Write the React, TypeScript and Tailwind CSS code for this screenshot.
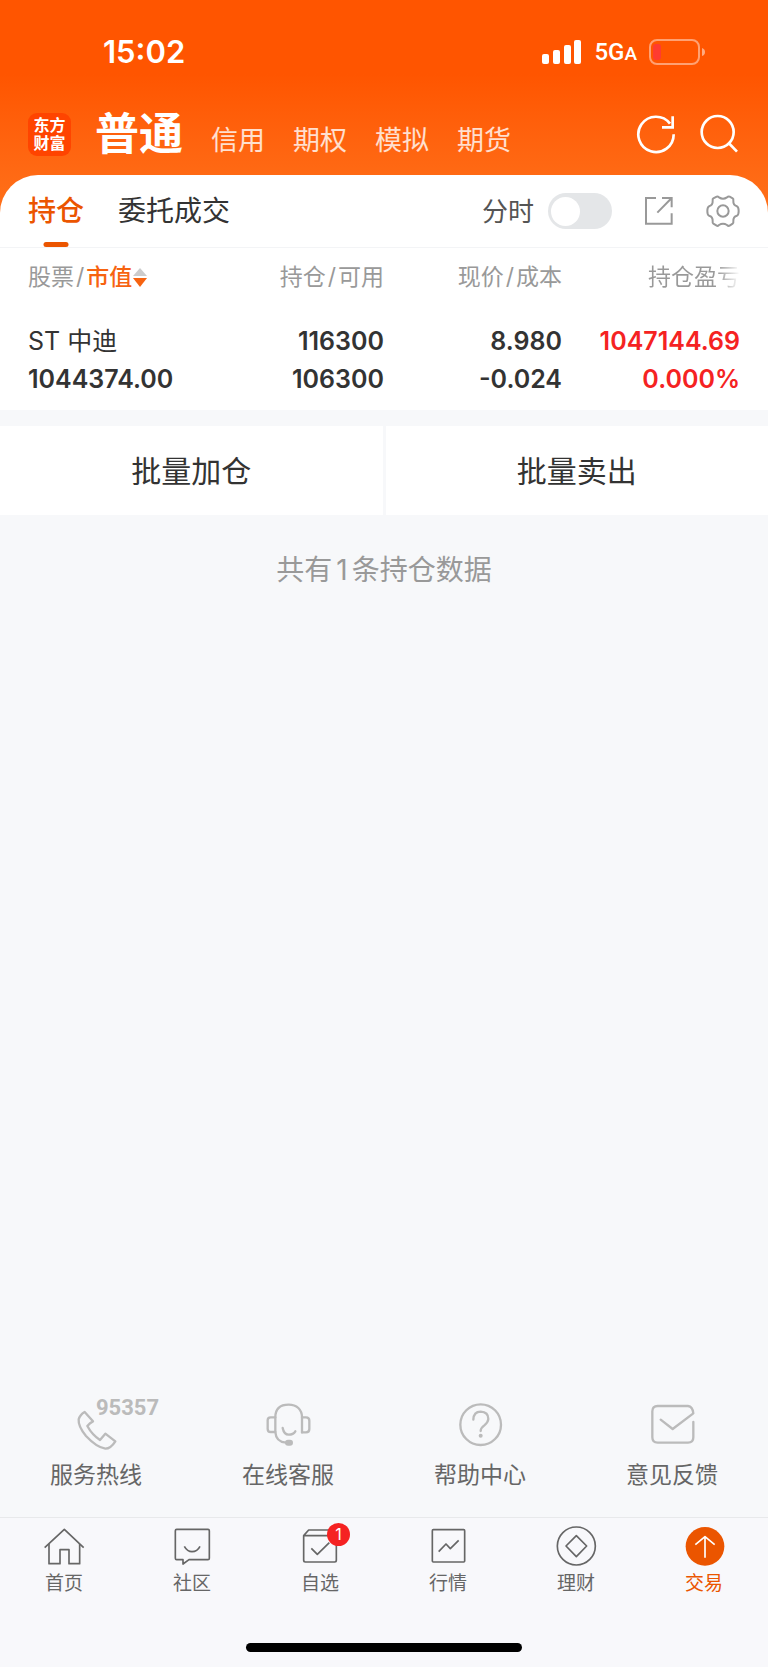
import React, { useState } from 'react'

const accountTypes = ['信用', '期权', '模拟', '期货']

const holdings = [
  {
    name: 'ST 中迪',
    marketValue: '1044374.00',
    amount: '116300',
    available: '106300',
    price: '8.980',
    cost: '-0.024',
    profit: '1047144.69',
    profitRate: '0.000%',
  },
]

const services = [
  {
    label: '服务热线',
    extra: '95357',
    viewBox: '216 72 144 144',
    icon: (
      <path d="M254 96 L279 124 Q270 128 262 138 Q276 164 300 180 L316 161 L346 184 Q332 206 316 206 Q290 202 258 168 Q234 138 236 118 Q240 104 254 96 Z" />
    ),
  },
  {
    label: '在线客服',
    viewBox: '792 72 144 144',
    icon: (
      <>
        <path d="M826 156 V112 C826 86 842 74 866 74 C890 74 906 88 906 112 V157" />
        <path d="M826 112 H812 Q803 112 803 121 V146 Q803 156 812 156 H826 Q828 186 858 188" />
        <path d="M906 112 H918 Q928 112 928 122 V147 Q928 157 918 157 H906" />
        <path d="M848 144 Q852 164 866 164 Q880 164 886 154" />
        <rect x="855" y="179" width="24" height="18" rx="9" fill="currentColor" stroke="none" />
      </>
    ),
  },
  {
    label: '帮助中心',
    viewBox: '216 72 144 144',
    icon: (
      <>
        <circle cx="290" cy="134" r="61" />
        <path d="M268 119 Q269 95 290 95 Q313 96 313 117 Q312 127 301 136 Q290 144 290 153" />
        <circle cx="290" cy="167" r="6" fill="currentColor" stroke="none" />
      </>
    ),
  },
  {
    label: '意见反馈',
    viewBox: '792 72 144 144',
    icon: (
      <path d="M928 126 V172 Q928 188 912 188 H821 Q805 188 805 172 V94 Q805 78 821 78 H912 Q926 80 928 100 L866 147 L830 119" />
    ),
  },
]

const tabs = [
  {
    label: '首页',
    viewBox: '126 72 132 132',
    icon: (
      <>
        <path d="M134 143 L193 88 L251 143" />
        <path d="M147 132 V191 H180 V149 H207 V191 H239 V132" />
      </>
    ),
  },
  {
    label: '社区',
    viewBox: '510 72 132 132',
    icon: (
      <>
        <path d="M530 88 H624 Q628 88 628 92 V175 Q628 179 624 179 H567 L549 192 V179 H530 Q526 179 526 175 V92 Q526 88 530 88 Z" />
        <path d="M553 139 Q562 155 576 155 Q592 155 600 139" />
      </>
    ),
  },
  {
    label: '自选',
    badge: 1,
    viewBox: '894 72 132 132',
    icon: (
      <>
        <path d="M911 107 L926 90 H1000 L1009 107 V181 Q1009 186 1004 186 H916 Q911 186 911 181 Z H1009" />
        <path d="M934 145 L952 163 L988 128" />
      </>
    ),
  },
  {
    label: '行情',
    viewBox: '126 72 132 132',
    icon: (
      <>
        <rect x="145" y="89" width="97" height="97" rx="3" />
        <path d="M164 155 L186 132 L199 146 L224 121" />
      </>
    ),
  },
  {
    label: '理财',
    viewBox: '510 72 132 132',
    icon: (
      <>
        <circle cx="577" cy="138" r="57" />
        <path d="M577 107 L608 138 L577 170 L546 138 Z" />
      </>
    ),
  },
  {
    label: '交易',
    active: true,
    viewBox: '894 72 132 132',
    icon: (
      <>
        <circle cx="963" cy="139" r="58" fill="#eb5500" stroke="none" />
        <path d="M963 173 V110 M934 134 L963 110 L992 134" stroke="#fff" />
      </>
    ),
  },
]

function StatusBar() {
  return (
    <div className="flex h-26 items-center justify-between pr-[63px] pl-[103px]">
      <span className="text-[31px] font-semibold">15:02</span>
      <div className="flex items-center">
        <svg className="mr-3 h-[26px] w-10" viewBox="0 0 40 26" fill="currentColor">
          <rect x="0" y="15" width="7" height="10" rx="2" />
          <rect x="11" y="11" width="7" height="14" rx="2" />
          <rect x="22" y="6" width="7" height="19" rx="2" />
          <rect x="32" y="1" width="7" height="24" rx="2" />
        </svg>
        <span className="mr-3 font-[Roboto] text-2xl font-medium">
          5G<span className="text-[19px]">A</span>
        </span>
        <svg className="h-[26px] w-14" viewBox="0 0 56 26" fill="none">
          <rect x="1" y="1" width="49" height="24" rx="7" stroke="#fff" strokeOpacity="0.45" strokeWidth="2" />
          <rect x="4" y="5" width="8" height="16" rx="3" fill="#ff3b30" />
          <path d="M53 9 Q56 10 56 13 Q56 16 53 17 Z" fill="#fff" fillOpacity="0.5" />
        </svg>
      </div>
    </div>
  )
}

function AccountNav() {
  return (
    <div className="flex h-15 items-center px-7">
      <div className="flex h-[43px] w-[43px] flex-col items-center justify-center rounded-[9px] bg-[#ff4400] text-base leading-[18px] font-bold">
        <span>东方</span>
        <span>财富</span>
      </div>
      <nav className="ml-6 flex flex-1 items-baseline gap-7">
        <button className="text-[44px] leading-[60px] font-bold">普通</button>
        {accountTypes.map((type) => (
          <button key={type} className="text-[27px] text-white/80">
            {type}
          </button>
        ))}
      </nav>
      <div className="flex gap-6">
        <button aria-label="刷新">
          <svg className="h-10 w-10" viewBox="756 342 120 120" fill="none" stroke="currentColor" strokeWidth="8">
            <path d="M869 403 A53 53 0 1 1 858 371" />
            <path d="M866 349 V382 H834" />
          </svg>
        </button>
        <button aria-label="搜索">
          <svg className="h-10 w-10" viewBox="948 342 120 120" fill="none" stroke="currentColor" strokeWidth="8">
            <circle cx="1001" cy="396" r="48" />
            <path d="M1034 429 L1059 455" />
          </svg>
        </button>
      </div>
    </div>
  )
}

function HoldingTabs() {
  const [timeShare, setTimeShare] = useState(false)
  return (
    <div className="mt-[11px] flex h-[72px] items-center rounded-t-[38px] bg-white px-7">
      <button className="relative h-full text-[28px] text-[#eb5500]">
        <span className="font-medium">持仓</span>
        <span className="absolute bottom-0 left-1/2 h-[5px] w-[25px] -translate-x-1/2 rounded-sm bg-[#eb5500]" />
      </button>
      <button className="ml-[34px] h-full text-[28px] text-[#333]">委托成交</button>
      <div className="ml-auto flex items-center gap-8 text-[#999]">
        <label className="flex items-center gap-[14px] text-[26px] text-[#555]">
          分时
          <input
            type="checkbox"
            role="switch"
            checked={timeShare}
            onChange={() => setTimeShare(!timeShare)}
            className="flex h-9 w-16 appearance-none items-center rounded-full bg-[#e4e6e8] px-[3px] before:h-[29px] before:w-[29px] before:rounded-full before:bg-white checked:justify-end checked:bg-[#eb5500]"
          />
        </label>
        <button aria-label="分享">
          <svg className="h-[30px] w-[30px]" viewBox="782 588 90 90" fill="none" stroke="currentColor" strokeWidth="6">
            <path d="M818 594 H788 V671 H865 V640" />
            <path d="M836 594 H865 V622 M865 594 L822 638" />
          </svg>
        </button>
        <button aria-label="设置">
          <svg className="h-[34px] w-[34px]" viewBox="969 582 102 102" fill="none" stroke="currentColor" strokeWidth="6">
            <path d="M1001 590 Q1004 588 1008 592 Q1020 600 1032 592 Q1036 588 1040 590 L1049 595 Q1052 597 1051 602 Q1050 616 1062 619 Q1067 622 1067 633 Q1067 644 1062 647 Q1050 650 1051 664 Q1052 669 1049 671 L1040 677 Q1036 679 1032 675 Q1020 668 1008 675 Q1004 679 1001 677 L991 671 Q988 669 989 664 Q990 650 978 647 Q973 644 973 633 Q973 622 978 619 Q990 616 989 602 Q988 597 991 595 Z" />
            <circle cx="1020" cy="633" r="17" />
          </svg>
        </button>
      </div>
    </div>
  )
}

function HoldingTable() {
  return (
    <section className="border-t border-[#f3f4f6] bg-white px-7 py-3">
      <table className="w-full table-fixed text-right">
        <thead className="text-[23px] leading-[34px] text-[#999]">
          <tr>
            <th className="w-1/4 text-left font-normal whitespace-nowrap">
              股票<span className="mx-0.5">/</span>
              <button className="font-medium text-[#f76310]">
                市值
                <svg className="ml-px inline h-5 w-[14px] align-[-2px]" viewBox="0 0 14 20">
                  <path d="M7 1 L14 9 H0 Z" fill="#ccc" />
                  <path d="M7 20 L14 11 H0 Z" fill="#f76310" />
                </svg>
              </button>
            </th>
            <th className="w-1/4 font-normal">
              持仓<span className="mx-0.5">/</span>可用
            </th>
            <th className="w-1/4 font-normal">
              现价<span className="mx-0.5">/</span>成本
            </th>
            <th className="w-1/4 font-normal">
              <span className="bg-linear-to-r from-[#999] from-75% to-white bg-clip-text text-transparent">持仓盈亏</span>
            </th>
          </tr>
        </thead>
        <tbody className="text-[25px] leading-[38px] font-semibold text-[#333]">
          {holdings.map((item) => (
            <React.Fragment key={item.name}>
              <tr>
                <td className="pt-7 text-left font-normal">{item.name}</td>
                <td className="pt-7">{item.amount}</td>
                <td className="pt-7">{item.price}</td>
                <td className="pt-7 text-[#f52222]">{item.profit}</td>
              </tr>
              <tr>
                <td className="text-left">{item.marketValue}</td>
                <td>{item.available}</td>
                <td>{item.cost}</td>
                <td className="text-[#f52222]">{item.profitRate}</td>
              </tr>
            </React.Fragment>
          ))}
        </tbody>
      </table>
    </section>
  )
}

export default function App() {
  return (
    <div className="flex min-h-screen flex-col bg-[#f7f8fa] font-[Inter,'Noto_Sans_CJK_SC',sans-serif]">
      <header className="bg-linear-to-b from-[#ff5500] from-30% to-[#ff7019] to-85% text-white">
        <StatusBar />
        <AccountNav />
        <HoldingTabs />
      </header>

      <main className="flex flex-1 flex-col">
        <HoldingTable />

        <div className="mt-4 grid grid-cols-2 gap-[3px]">
          <button className="h-[89px] bg-white pt-0.5 text-[30px] text-[#333]">批量加仓</button>
          <button className="h-[89px] bg-white pt-0.5 text-[30px] text-[#333]">批量卖出</button>
        </div>
        <p className="mt-[35px] text-center text-[28px] leading-10 text-[#999]">
          共有<span className="mx-1">{holdings.length}</span>条持仓数据
        </p>

        <div className="mt-auto grid grid-cols-4 pt-10 pb-[27px]">
          {services.map((item) => (
            <a key={item.label} href="#" className="flex flex-col items-center text-[23px] leading-[30px] text-[#666]">
              <span className="relative text-[#bbb]">
                <svg
                  className="h-12 w-12 overflow-visible"
                  viewBox={item.viewBox}
                  fill="none"
                  stroke="currentColor"
                  strokeWidth="7"
                  strokeLinecap="round"
                  strokeLinejoin="round"
                >
                  {item.icon}
                </svg>
                {item.extra && (
                  <span className="absolute -top-2 left-6 font-[Roboto] text-[22px] leading-6 font-bold">{item.extra}</span>
                )}
              </span>
              <span className="mt-2">{item.label}</span>
            </a>
          ))}
        </div>
      </main>

      <footer className="border-t border-[#e8e9eb] bg-[#f8f8fb] pt-1.5 pb-[15px]">
        <nav className="grid grid-cols-6">
          {tabs.map((tab) => (
            <a
              key={tab.label}
              href="#"
              className={`flex flex-col items-center text-[19px] leading-6 ${tab.active ? 'text-[#eb5500]' : 'text-[#666]'}`}
            >
              <span className="relative">
                <svg
                  className="h-11 w-11"
                  viewBox={tab.viewBox}
                  fill="none"
                  stroke="currentColor"
                  strokeWidth="5"
                  strokeLinejoin="round"
                >
                  {tab.icon}
                </svg>
                {tab.badge && (
                  <span className="absolute -top-px left-[29px] h-[23px] w-[23px] rounded-full bg-[#f52222] text-center text-base leading-[23px] text-white">
                    {tab.badge}
                  </span>
                )}
              </span>
              <span className="mt-1">{tab.label}</span>
            </a>
          ))}
        </nav>
        <div className="mx-auto mt-[47px] h-[9px] w-[36%] rounded-full bg-black" />
      </footer>
    </div>
  )
}
